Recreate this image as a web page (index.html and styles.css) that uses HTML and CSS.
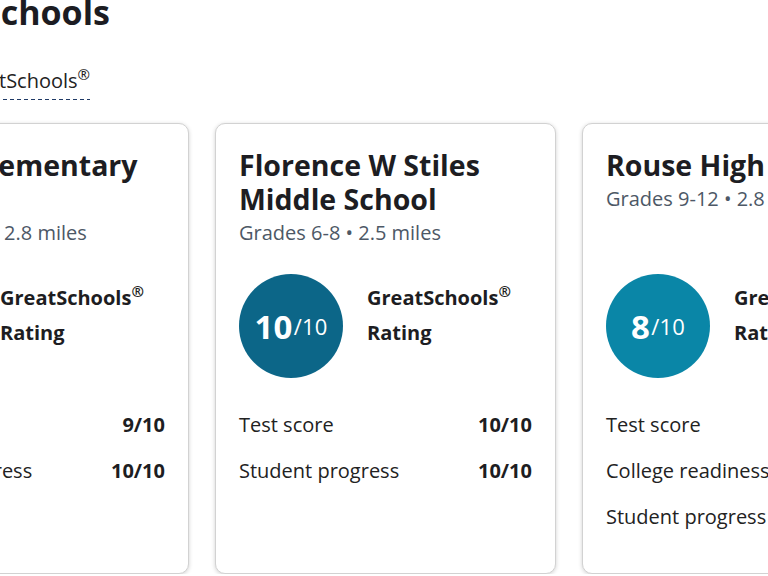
FILE: index.html
```html
<!DOCTYPE html>
<html lang="en">
<head>
<meta charset="utf-8">
<title>Nearby Schools</title>
<link rel="stylesheet" href="styles.css">
</head>
<body>
<main class="schools">
  <header class="schools-head">
    <h2 class="schools-title">Schools</h2>
    <p class="schools-source">Ratings by <a class="source-link" href="#">GreatSchools<sup>®</sup></a></p>
  </header>

  <div class="track">
    <article class="card">
      <div class="card-head">
        <h3 class="card-name">Carver Elementary School</h3>
        <p class="card-meta">Grades PK-5 • 2.8 miles</p>
      </div>
      <div class="rating">
        <div class="badge badge-9"><b>9</b>/10</div>
        <div class="rating-label">GreatSchools<sup>®</sup><br>Rating</div>
      </div>
      <ul class="scores">
        <li><span>Test score</span><b>9/10</b></li>
        <li><span>Student progress</span><b>10/10</b></li>
      </ul>
    </article>

    <article class="card">
      <div class="card-head">
        <h3 class="card-name">Florence W Stiles Middle School</h3>
        <p class="card-meta">Grades 6-8 • 2.5 miles</p>
      </div>
      <div class="rating">
        <div class="badge badge-10"><b>10</b>/10</div>
        <div class="rating-label">GreatSchools<sup>®</sup><br>Rating</div>
      </div>
      <ul class="scores">
        <li><span>Test score</span><b>10/10</b></li>
        <li><span>Student progress</span><b>10/10</b></li>
      </ul>
    </article>

    <article class="card">
      <div class="card-head">
        <h3 class="card-name">Rouse High School</h3>
        <p class="card-meta">Grades 9-12 • 2.8 miles</p>
      </div>
      <div class="rating">
        <div class="badge badge-8"><b>8</b>/10</div>
        <div class="rating-label">GreatSchools<sup>®</sup><br>Rating</div>
      </div>
      <ul class="scores">
        <li><span>Test score</span><b>8/10</b></li>
        <li><span>College readiness</span><b>7/10</b></li>
        <li><span>Student progress</span><b>8/10</b></li>
      </ul>
    </article>
  </div>
</main>
</body>
</html>
```

FILE: styles.css
```css
html, body {
  margin: 0;
  padding: 0;
  background: #ffffff;
  overflow: hidden;
}

body {
  font-family: "Open Sans", "Noto Sans", sans-serif;
  color: #222222;
}

.schools {
  display: flex;
  flex-direction: column;
}

/* heading block sits a little left of the viewport edge */
.schools-head {
  margin-left: -18px;
}

.schools-title {
  margin: -8px 0 0;
  font-size: 34px;
  line-height: 40px;
  font-weight: 700;
  color: #1c1c22;
}

.schools-source {
  margin: 35px 0 0 -129px;
  font-size: 20px;
  line-height: 28px;
  color: #222222;
}

/* dotted-style underline drawn as a repeating dash */
.source-link {
  color: inherit;
  text-decoration: none;
  padding-bottom: 6px;
  background: linear-gradient(to right, #1f3a66 4px, transparent 4px) left bottom / 7px 1.5px repeat-x;
}

.source-link sup,
.rating-label sup {
  font-size: 0.75em;
  line-height: 0;
  vertical-align: 0.55em;
}

/* horizontally scrolled carousel */
.track {
  display: flex;
  gap: 26px;
  margin: 28px 0 0 -152px;
  align-items: stretch;
}

.card {
  flex: none;
  width: 341px;
  box-sizing: border-box;
  padding: 24px 23px 42px 23px;
  border: 1px solid #d2d2d2;
  border-radius: 10px;
  box-shadow: 0 1px 4px rgba(0, 0, 0, 0.18);
  background: #ffffff;
}

.card-head {
  min-height: 126px;
}

.card-name {
  margin: 0 0 3px;
  font-size: 28.5px;
  line-height: 34px;
  font-weight: 700;
  color: #1d1d22;
}

.card-meta {
  margin: 0;
  font-size: 20px;
  line-height: 28px;
  color: #4d5866;
}

.rating {
  display: flex;
  align-items: flex-start;
  gap: 24px;
}

.badge {
  flex: none;
  width: 104px;
  height: 104px;
  border-radius: 50%;
  display: flex;
  align-items: center;
  justify-content: center;
  color: #ffffff;
  font-size: 22px;
  letter-spacing: 0.2px;
}

.badge b {
  font-size: 33px;
  font-weight: 700;
  margin-right: 1px;
}

.badge-10 { background: #0c6688; }
.badge-9 { background: #0b7397; }
.badge-8 { background: #0a86a7; }

.rating-label {
  padding-top: 6px;
  font-size: 20px;
  line-height: 35px;
  font-weight: 700;
  color: #1d1d22;
}

.scores {
  list-style: none;
  margin: 33px 0 0;
  padding: 0;
  display: flex;
  flex-direction: column;
  gap: 18px;
}

.scores li {
  display: flex;
  justify-content: space-between;
  font-size: 20px;
  line-height: 28px;
}

.scores b {
  font-weight: 700;
  color: #1d1d22;
}
```
